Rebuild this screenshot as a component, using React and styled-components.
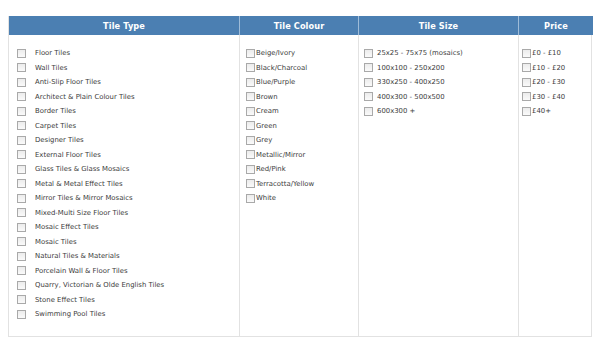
import React from 'react';
import styled, { createGlobalStyle } from 'styled-components';

const GlobalStyle = createGlobalStyle`
  body {
    margin: 0;
    background: #ffffff;
    font-family: Verdana, "DejaVu Sans", sans-serif;
  }
`;

const Page = styled.div`
  padding: 16px 8px 0 8px;
  width: 584px;
`;

const FilterTable = styled.div`
  display: grid;
  grid-template-columns: 230px 119px 160px 75px;
  border: 1px solid #e2e2e2;
  border-top: none;
  height: 321px;
  box-sizing: border-box;
`;

const Column = styled.div`
  display: flex;
  flex-direction: column;
  border-left: ${(p) => (p.first ? 'none' : '1px solid #e2e2e2')};
`;

const Header = styled.div`
  height: 19px;
  background: #4b7fb2;
  color: #ffffff;
  font-size: 8.2px;
  font-weight: bold;
  letter-spacing: 0.1px;
  display: flex;
  align-items: center;
  justify-content: center;
  border-left: ${(p) => (p.first ? 'none' : '1px solid #9fbcd8')};
  margin-left: ${(p) => (p.first ? '0' : '-1px')};
`;

const List = styled.ul`
  list-style: none;
  margin: 0;
  padding: 11px 0 0 ${(p) => p.pad}px;
`;

const Item = styled.li`
  display: flex;
  align-items: center;
  height: 14.5px;
  font-size: 6.9px;
  color: #3c3c3c;
`;

const Box = styled.span`
  width: 7px;
  height: 7px;
  border: 1px solid #a9a9a9;
  background: linear-gradient(#ececec, #fafafa);
  margin-right: ${(p) => p.gap}px;
  flex-shrink: 0;
`;

const columns = [
  {
    title: 'Tile Type',
    pad: 8,
    gap: 9,
    items: [
      'Floor Tiles',
      'Wall Tiles',
      'Anti-Slip Floor Tiles',
      'Architect & Plain Colour Tiles',
      'Border Tiles',
      'Carpet Tiles',
      'Designer Tiles',
      'External Floor Tiles',
      'Glass Tiles & Glass Mosaics',
      'Metal & Metal Effect Tiles',
      'Mirror Tiles & Mirror Mosaics',
      'Mixed-Multi Size Floor Tiles',
      'Mosaic Effect Tiles',
      'Mosaic Tiles',
      'Natural Tiles & Materials',
      'Porcelain Wall & Floor Tiles',
      'Quarry, Victorian & Olde English Tiles',
      'Stone Effect Tiles',
      'Swimming Pool Tiles',
    ],
  },
  {
    title: 'Tile Colour',
    pad: 6,
    gap: 1,
    items: [
      'Beige/Ivory',
      'Black/Charcoal',
      'Blue/Purple',
      'Brown',
      'Cream',
      'Green',
      'Grey',
      'Metallic/Mirror',
      'Red/Pink',
      'Terracotta/Yellow',
      'White',
    ],
  },
  {
    title: 'Tile Size',
    pad: 5,
    gap: 4,
    items: [
      '25x25 - 75x75 (mosaics)',
      '100x100 - 250x200',
      '330x250 - 400x250',
      '400x300 - 500x500',
      '600x300 +',
    ],
  },
  {
    title: 'Price',
    pad: 3,
    gap: 1,
    items: ['£0 - £10', '£10 - £20', '£20 - £30', '£30 - £40', '£40+'],
  },
];

const App = () => (
  <>
    <GlobalStyle />
    <Page>
      <FilterTable>
        {columns.map((col, i) => (
          <Column key={col.title} first={i === 0}>
            <Header first={i === 0}>{col.title}</Header>
            <List pad={col.pad}>
              {col.items.map((item) => (
                <Item key={item}>
                  <Box gap={col.gap} />
                  {item}
                </Item>
              ))}
            </List>
          </Column>
        ))}
      </FilterTable>
    </Page>
  </>
);

export default App;
